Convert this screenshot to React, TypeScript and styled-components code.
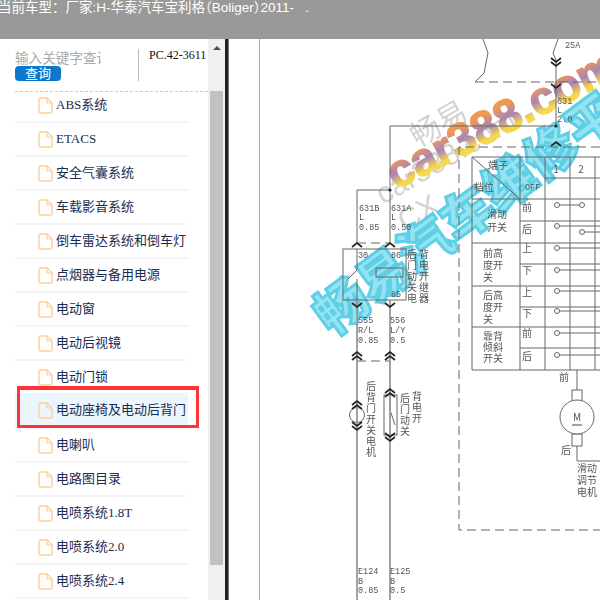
import React from "react";
import styled, { createGlobalStyle } from "styled-components";

const GlobalStyle = createGlobalStyle`
  html, body {
    margin: 0;
    padding: 0;
    height: 600px;
    overflow: hidden;
    background: #fff;
  }
`;

const Page = styled.div`
  width: 600px;
  height: 600px;
  display: flex;
  flex-direction: column;
  overflow: hidden;
`;

const TopBar = styled.header`
  height: 39px;
  flex: none;
  background: #999;
  color: #fff;
  font: 13.5px/16px "Liberation Sans", "Noto Sans CJK SC", sans-serif;
  white-space: pre;
  margin-left: -2px;
`;

// the brackets round the model name are set half width in the reference
const HalfWidth = styled.span`
  font-feature-settings: "halt";
`;

const Body = styled.div`
  flex: 1;
  display: flex;
  min-height: 0;
`;

const Sidebar = styled.aside`
  width: 208px;
  flex: none;
  overflow: hidden;
`;

const SearchBar = styled.div`
  height: 52px;
  margin-left: 15px;
  display: flex;
  border-bottom: 1px dashed #ccc;
`;

const SearchColumn = styled.div`
  width: 86px;
  padding-top: 12px;
  overflow: hidden;
`;

const SearchInput = styled.input`
  display: block;
  width: 86px;
  height: 16px;
  padding: 0;
  border: 0;
  outline: 0;
  font: 13.6px/16px "Liberation Sans", "Noto Sans CJK SC", sans-serif;
  &::placeholder {
    color: #aaa;
    opacity: 1;
  }
`;

const SearchButton = styled.button`
  display: block;
  width: 46px;
  height: 15px;
  margin-top: -1px;
  padding: 0;
  border: 0;
  border-radius: 4px;
  background: #0c77cf;
  color: #fff;
  font: 13px/15px "Liberation Sans", "Noto Sans CJK SC", sans-serif;
`;

const SearchDivider = styled.div`
  width: 1px;
  height: 32px;
  margin: 10px 10px 0 37px;
  background: #bbb;
`;

const PartCode = styled.div`
  margin-top: 8px;
  color: #111;
  white-space: nowrap;
  font: 12px/16px "Liberation Serif", serif;
`;

const FileList = styled.ul`
  list-style: none;
  margin: -3px 0 0 15px;
  padding: 0;
  width: 173px;
`;

const FileRow = styled.li<{ $active?: boolean }>`
  position: relative;
  box-sizing: border-box;
  height: 34px;
  padding-left: 23px;
  display: flex;
  align-items: center;
  gap: 3px;
  color: #1d2b4f;
  font: 13px/16px "Liberation Serif", "Noto Sans CJK SC", serif;
  white-space: nowrap;
  border-bottom: ${(p) => (p.$active ? "0" : "2px solid #f5f5f5")};
  background: ${(p) => (p.$active ? "#eaf5fd" : "transparent")};
  margin: ${(p) => (p.$active ? "-2px 0 2px" : "0")};
`;

const RedFrame = styled.div`
  position: absolute;
  left: 2px;
  top: -7px;
  width: 182px;
  height: 42px;
  box-sizing: border-box;
  border: 3px solid #f33;
  border-top-width: 4px;
`;

const ScrollTrack = styled.div`
  width: 17px;
  flex: none;
  background: #f0f0f0;
  display: flex;
  flex-direction: column;
  align-items: center;
`;

const ScrollArrow = styled.div`
  width: 0;
  height: 0;
  margin: 7px 0 41px;
  border-left: 4px solid transparent;
  border-right: 4px solid transparent;
  border-bottom: 4px solid #505050;
`;

const ScrollThumb = styled.div`
  width: 13px;
  height: 474px;
  background: #c1c1c1;
`;

const BlackEdge = styled.div`
  width: 4px;
  flex: none;
  background: linear-gradient(90deg, #222 0 3px, #777 3px);
`;

const Gutter = styled.div`
  width: 30px;
  flex: none;
  border-right: 1px solid #aaa;
`;

const DiagramSvg = styled.svg`
  flex: 1;
  width: 340px;
  height: 561px;
  display: block;
`;

const WireText = styled.text`
  font: 8.5px "Liberation Mono", monospace;
  fill: #555;
`;

const CellText = styled.text`
  font: 10px "Noto Sans CJK SC", sans-serif;
  fill: #555;
  text-anchor: middle;
`;

const BrandMark = styled.text`
  font: 700 46px "Liberation Sans", sans-serif;
  fill: url(#brandFill);
  stroke: url(#brandFill);
  stroke-width: 1.6px;
`;

const BlueMark = styled.text`
  font: 900 52px "Noto Sans CJK SC", sans-serif;
  fill: #8ee2f1;
  stroke: #55cde6;
  stroke-width: 3px;
  opacity: 0.94;
`;

const GhostMark = styled.text<{ $size: number }>`
  font: ${(p) => p.$size}px "Liberation Sans", "Noto Sans CJK SC", sans-serif;
  fill: #c9c9c9;
  opacity: 0.8;
`;

const files = [
  "ABS系统",
  "ETACS",
  "安全气囊系统",
  "车载影音系统",
  "倒车雷达系统和倒车灯",
  "点烟器与备用电源",
  "电动窗",
  "电动后视镜",
  "电动门锁",
  "电动座椅及电动后背门",
  "电喇叭",
  "电路图目录",
  "电喷系统1.8T",
  "电喷系统2.0",
  "电喷系统2.4",
];

// table rows: label, y of the label, y of the contact
const switchRows: [string, number, number][] = [
  ["前", 211, 205],
  ["后", 233, 226],
  ["上", 252, 248],
  ["下", 274, 270],
  ["上", 296, 291],
  ["下", 317, 311],
  ["前", 337, 333],
  ["后", 360, 355],
];

const tableLines: [number, number, number, number][] = [
  [472, 157, 600, 157],
  [545, 178, 600, 178],
  [472, 199, 600, 199],
  [520, 221, 600, 221],
  [472, 243, 600, 243],
  [520, 264, 600, 264],
  [472, 286, 600, 286],
  [520, 307, 600, 307],
  [472, 327, 600, 327],
  [520, 348, 600, 348],
  [472, 370, 600, 370],
  [472, 157, 472, 370],
  [520, 157, 520, 370],
  [545, 157, 545, 370],
  [570, 157, 570, 370],
  [595, 157, 595, 370],
  [472, 157, 520, 199],
];

const wireLabels: [string, number, number][] = [
  ["25A", 565, 48],
  ["631", 557, 104],
  ["L", 557, 113],
  ["2.0", 557, 122],
  ["631B", 359, 211],
  ["L", 359, 220],
  ["0.85", 359, 230],
  ["631A", 391, 211],
  ["L", 391, 220],
  ["0.50", 391, 230],
  ["30", 358, 258],
  ["86", 391, 258],
  ["85", 391, 297],
  ["555", 358, 323],
  ["R/L", 358, 333],
  ["0.85", 358, 343],
  ["556", 390, 323],
  ["L/Y", 390, 333],
  ["0.5", 390, 343],
  ["E124", 358, 574],
  ["B", 358, 584],
  ["0.85", 358, 593],
  ["E125", 390, 574],
  ["B", 390, 584],
  ["0.5", 390, 593],
];

const cellLabels: [string, number, number][] = [
  ["端子", 498, 169],
  ["档位", 484, 191],
  ["滑动", 497, 218],
  ["开关", 497, 231],
  ["前高", 493, 257],
  ["度开", 493, 269],
  ["关", 488, 281],
  ["后高", 493, 299],
  ["度开", 493, 311],
  ["关", 488, 323],
  ["靠背", 493, 340],
  ["倾斜", 493, 351],
  ["开关", 493, 362],
  ["前", 564, 381],
  ["后", 566, 454],
  ["滑动", 587, 472],
  ["调节", 587, 484],
  ["电机", 587, 496],
];

const verticalText: [string, number, number][] = [
  ["后背门开关电机", 371, 390],
  ["后门动关", 405, 402],
  ["背电开", 417, 400],
  ["后门动关电", 412, 258],
  ["背电开继器", 424, 258],
];

function FileIcon() {
  return (
    <svg width="15" height="17" viewBox="0 0 15 17" fill="none">
      <path
        d="M2.5 1h6.5l5 5v8.5a1.5 1.5 0 0 1-1.5 1.5h-10a1.5 1.5 0 0 1-1.5-1.5v-12a1.5 1.5 0 0 1 1.5-1.5z"
        stroke="#fdcf9a"
        strokeWidth="1.4"
      />
      <path d="M9 1v5h5" stroke="#fdcf9a" strokeWidth="1.2" />
    </svg>
  );
}

// stacked wedge marks used for the connectors on the wires
function Chevron({ x, y, up, count = 2 }: { x: number; y: number; up?: boolean; count?: number }) {
  const dir = up ? -1 : 1;
  return (
    <g fill="none" stroke="#222" strokeWidth="1.7">
      {Array.from({ length: count }).map((_, i) => (
        <path
          key={i}
          d={`M${x - 5} ${y + i * 4} L${x} ${y + i * 4 + 4 * dir} L${x + 5} ${y + i * 4}`}
        />
      ))}
    </g>
  );
}

function Diagram() {
  return (
    <DiagramSvg viewBox="260 39 340 561">
      <defs>
        <linearGradient id="brandFill" x1="0" y1="0" x2="0" y2="1">
          <stop offset="0.28" stopColor="#f09a50" />
          <stop offset="0.52" stopColor="#a984b8" />
          <stop offset="0.74" stopColor="#f8d84a" />
        </linearGradient>
        <filter id="soft" x="-5%" y="-5%" width="110%" height="110%">
          <feGaussianBlur stdDeviation="0.45" />
        </filter>
        <filter id="softer" x="-5%" y="-20%" width="110%" height="140%">
          <feGaussianBlur stdDeviation="0.6" />
        </filter>
      </defs>

      <g filter="url(#softer)">
        <GhostMark $size={30} x={0} y={0} transform="translate(418 148) rotate(-30)">畅易</GhostMark>
        <GhostMark $size={30} x={0} y={0} transform="translate(383 205) rotate(-30)">car388.com</GhostMark>
        <GhostMark $size={30} x={0} y={0} transform="translate(405 232) rotate(-30)">CX</GhostMark>
        <BrandMark x={0} y={0} transform="translate(396 190) rotate(-27)">car388.com</BrandMark>
        <BlueMark x={0} y={0} transform="translate(332 337) rotate(-36.5)">畅易汽车维修平台</BlueMark>
      </g>

      <g filter="url(#soft)">
        <g fill="none" stroke="#666" strokeWidth="1">
          <path d="M483 39 L488 53 L484 73 L475 82" />
          <path d="M558 39 L553 53 L556 60 V126 H390 V243" />
          <path d="M390 190 H357 V243" />
          <g strokeDasharray="9 5">
            <path d="M475 82 H600" />
            <path d="M600 147 H459 V530 H600" />
            <path d="M357 243 H390" />
            <path d="M357 361 H390" />
          </g>
          {tableLines.map(([x1, y1, x2, y2], i) => (
            <line key={i} x1={x1} y1={y1} x2={x2} y2={y2} />
          ))}
          <rect x="343" y="249" width="63" height="51" />
          <rect x="376" y="268" width="27" height="9" />
          <path d="M357 249 V270 L348 279" />
          <path d="M357 279 V300" />
          <path d="M582 205 H557 M600 226 H557 M600 232 H582 M600 248 H557 M600 270 H557 M600 291 H557 M600 311 H557 M600 333 H557 M600 355 H557" />
          <path d="M577 370 V390 M577 446 V461 H600" />
          <rect x="572" y="390" width="10" height="11" />
          <rect x="572" y="434" width="10" height="12" />
          <circle cx="577" cy="417" r="17" fill="#fff" />
          <rect x="384" y="395" width="13" height="40" />
          <path d="M390 395 V410 L395 425" />
          <circle cx="357" cy="415" r="7.5" />
        </g>
        <path d="M357 300 V600 M390 300 V600" stroke="#999" strokeWidth="1.8" fill="none" />
        <circle cx="556" cy="126" r="1.6" fill="#222" />
        <circle cx="390" cy="190" r="1.6" fill="#222" />
        {switchRows.map(([label, labelY, y], i) => (
          <g key={i}>
            <CellText x={527} y={labelY}>{label}</CellText>
            <circle cx={557} cy={y} r={2.5} fill="#fff" stroke="#666" />
          </g>
        ))}
        <circle cx="582" cy="205" r="2.5" fill="#fff" stroke="#666" />
        <circle cx="582" cy="232" r="2.5" fill="#fff" stroke="#666" />
        <Chevron x={556} y={58} />
        <Chevron x={556} y={84} count={1} />
        <Chevron x={556} y={146} up count={1} />
        <Chevron x={357} y={247} up count={1} />
        <Chevron x={390} y={247} up count={1} />
        <Chevron x={357} y={303} count={1} />
        <Chevron x={390} y={303} count={1} />
        <Chevron x={357} y={356} up />
        <Chevron x={390} y={356} up />
        <Chevron x={357} y={405} up />
        <Chevron x={357} y={422} />
        <Chevron x={390} y={393} up />
        <Chevron x={390} y={433} />
        {wireLabels.map(([text, x, y], i) => (
          <WireText key={i} x={x} y={y}>{text}</WireText>
        ))}
        {cellLabels.map(([text, x, y], i) => (
          <CellText key={i} x={x} y={y}>{text}</CellText>
        ))}
        {verticalText.map(([text, x, y]) =>
          text.split("").map((ch, i) => (
            <CellText key={text + i} x={x} y={y + i * 11}>{ch}</CellText>
          ))
        )}
        <CellText x={556} y={173}>1</CellText>
        <CellText x={581} y={173}>2</CellText>
        <WireText x={525} y={190}>OFF</WireText>
        <CellText x={577} y={421}>M</CellText>
        <path d="M572 425 H582" stroke="#444" />
      </g>
    </DiagramSvg>
  );
}

export default function App() {
  return (
    <Page>
      <GlobalStyle />
      <TopBar>
        当前车型：厂家:H-华泰汽车宝利格<HalfWidth>（Boliger）</HalfWidth>2011-   .
      </TopBar>
      <Body>
        <Sidebar>
          <SearchBar>
            <SearchColumn>
              <SearchInput placeholder="输入关键字查询" />
              <SearchButton>查询</SearchButton>
            </SearchColumn>
            <SearchDivider />
            <PartCode>PC.42-3611</PartCode>
          </SearchBar>
          <FileList>
            {files.map((name, i) => (
              <FileRow key={name} $active={i === 9}>
                <FileIcon />
                {name}
                {i === 9 && <RedFrame />}
              </FileRow>
            ))}
          </FileList>
        </Sidebar>
        <ScrollTrack>
          <ScrollArrow />
          <ScrollThumb />
        </ScrollTrack>
        <BlackEdge />
        <Gutter />
        <Diagram />
      </Body>
    </Page>
  );
}
